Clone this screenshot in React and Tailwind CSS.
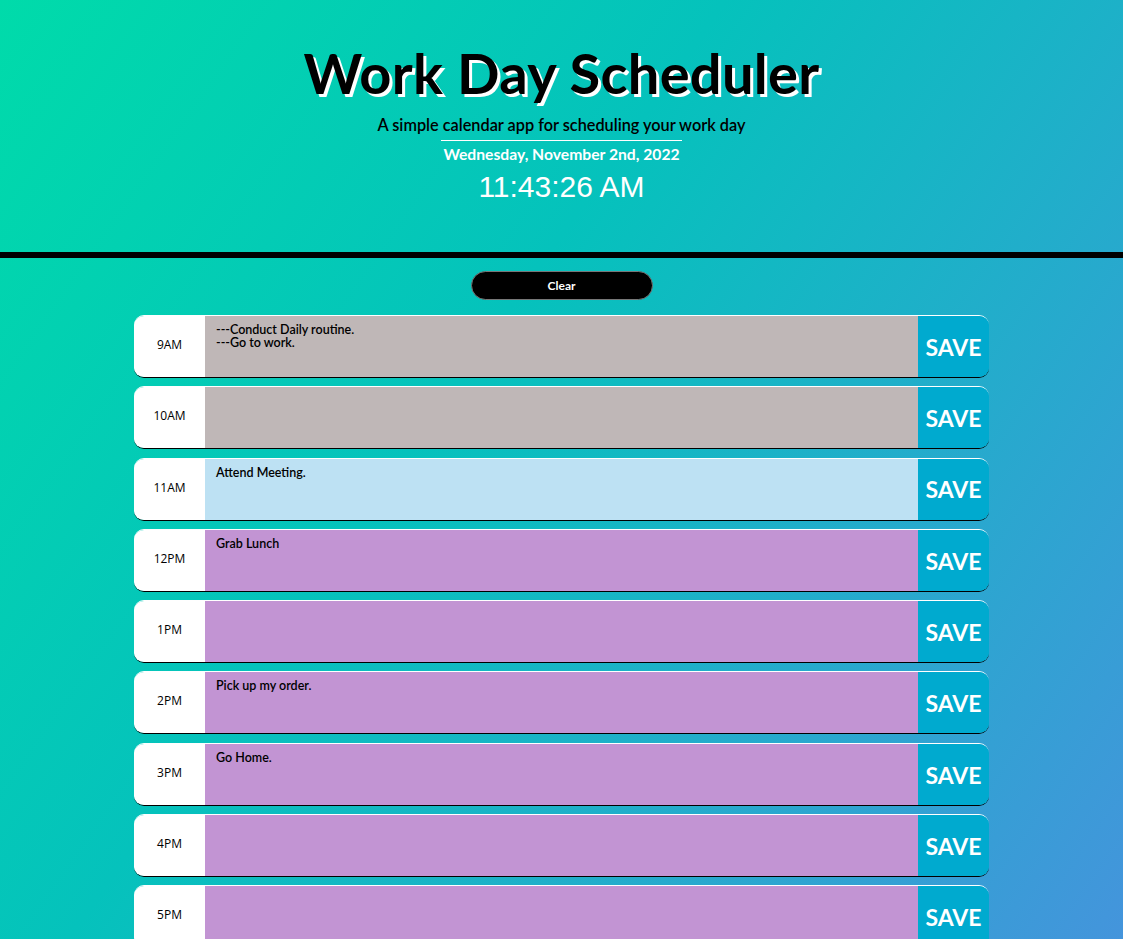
const HOURS = [
  { label: "9AM", text: "---Conduct Daily routine.\n---Go to work.", state: "past" },
  { label: "10AM", text: "", state: "past" },
  { label: "11AM", text: "Attend Meeting.", state: "present" },
  { label: "12PM", text: "Grab Lunch", state: "future" },
  { label: "1PM", text: "", state: "future" },
  { label: "2PM", text: "Pick up my order.", state: "future" },
  { label: "3PM", text: "Go Home.", state: "future" },
  { label: "4PM", text: "", state: "future" },
  { label: "5PM", text: "", state: "future" },
];

const STATE_BG = {
  past: "bg-[#bfb7b7]",
  present: "bg-[#bde1f3]",
  future: "bg-[#c294d3]",
};

function HourRow({ hour }) {
  return (
    <div className="flex h-[63px] rounded-[10px] overflow-hidden border-t border-t-white border-b border-b-black">
      <div className="w-[71px] shrink-0 bg-white flex items-center justify-center pb-[3px] text-[12px] text-black font-['Open_Sans',sans-serif]">
        {hour.label}
      </div>
      <textarea
        defaultValue={hour.text}
        className={`flex-1 resize-none outline-none px-[11px] pt-[7px] text-[12.5px] leading-[13px] font-semibold text-black font-['Lato',sans-serif] ${STATE_BG[hour.state]}`}
      />
      <button className="w-[71px] shrink-0 bg-[#00aacf] text-white text-[23px] font-bold font-['Lato',sans-serif] pt-[1px]">
        SAVE
      </button>
    </div>
  );
}

export default function App() {
  return (
    <div className="min-h-screen bg-[linear-gradient(125deg,#00dbaa_0%,#05c2bc_40%,#4693dd_100%)] pb-[40px]">
      <header className="h-[252px] flex flex-col items-center pt-[38px] text-center">
        <h1 className="text-[56px] leading-[70px] font-bold text-black font-['Lato',sans-serif] [text-shadow:3px_3px_0_#fff] tracking-[0.3px]">
          Work Day Scheduler
        </h1>
        <p className="mt-[8px] text-[16.3px] leading-[18px] font-semibold text-black font-['Lato',sans-serif]">
          A simple calendar app for scheduling your work day
        </p>
        <p className="mt-[6px] border-t border-white pt-[4px] px-[2px] text-[15.7px] leading-[18px] font-bold text-white font-['Lato',sans-serif]">
          Wednesday, November 2nd, 2022
        </p>
        <p className="mt-[7px] text-[30px] leading-[34px] text-white font-['Liberation_Sans',sans-serif]">
          11:43:26 AM
        </p>
      </header>
      <div className="h-[6px] bg-black" />
      <div className="flex justify-center pt-[13px]">
        <button className="w-[182px] h-[29px] rounded-full bg-black border border-[#777] text-white text-[12px] font-bold font-['Lato',sans-serif]">
          Clear
        </button>
      </div>
      <main className="w-[855px] mx-auto mt-[15px] flex flex-col gap-[8.3px]">
        {HOURS.map((h) => (
          <HourRow key={h.label} hour={h} />
        ))}
      </main>
    </div>
  );
}
